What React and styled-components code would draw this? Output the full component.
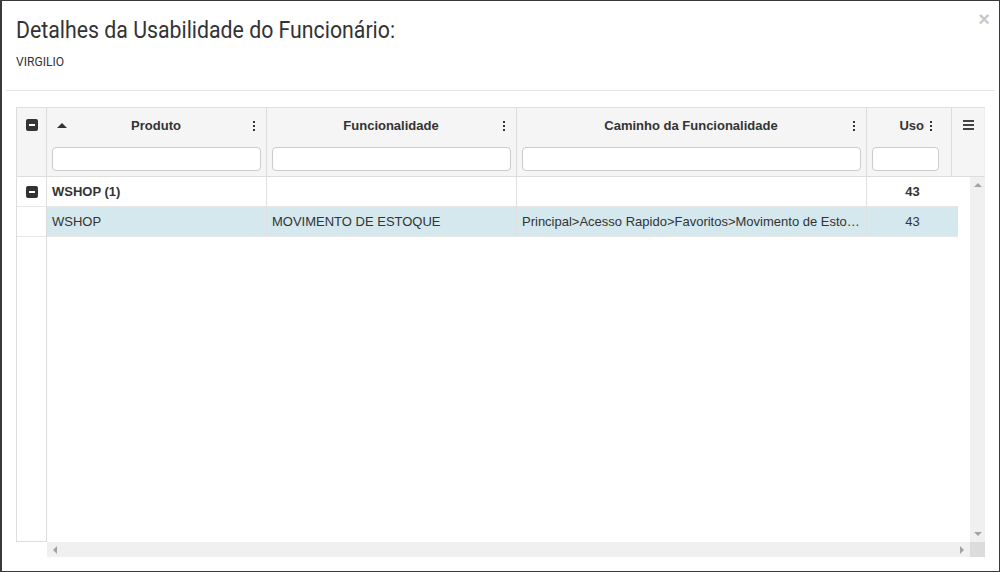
import styled, { createGlobalStyle } from "styled-components";

const GlobalStyle = createGlobalStyle`
  html, body {
    margin: 0;
    padding: 0;
    background: #fff;
  }
  * {
    box-sizing: border-box;
  }
`;

const columns = [
  { key: "produto", title: "Produto", width: 220, sort: true },
  { key: "func", title: "Funcionalidade", width: 250 },
  { key: "caminho", title: "Caminho da Funcionalidade", width: 350 },
];

const rows = [
  {
    group: true,
    cells: ["WSHOP (1)", "", "", "43"],
  },
  {
    selected: true,
    cells: [
      "WSHOP",
      "MOVIMENTO DE ESTOQUE",
      "Principal>Acesso Rapido>Favoritos>Movimento de Estoque",
      "43",
    ],
  },
];

const App = () => {
  return (
    <Modal>
      <GlobalStyle />
      <Header>
        <Title>Detalhes da Usabilidade do Funcionário:</Title>
        <SubTitle>VIRGILIO</SubTitle>
        <Close>×</Close>
      </Header>
      <Body>
        <Grid>
          <HeaderRow>
            <SelectCell>
              <MinusBox />
            </SelectCell>
            {columns.map((col) => (
              <HeaderCell key={col.key} $width={col.width}>
                <TitleLine>
                  {col.sort ? <SortArrow /> : <span />}
                  <ColTitle>{col.title}</ColTitle>
                  <Dots>
                    <i />
                    <i />
                    <i />
                  </Dots>
                </TitleLine>
                <FilterInput />
              </HeaderCell>
            ))}
            <HeaderCell $width={85}>
              <CompactTitleLine>
                <ColTitle>Uso</ColTitle>
                <Dots>
                  <i />
                  <i />
                  <i />
                </Dots>
              </CompactTitleLine>
              <FilterInput $short />
            </HeaderCell>
            <MenuCell>
              <Burger>
                <i />
                <i />
                <i />
              </Burger>
            </MenuCell>
          </HeaderRow>

          <GridBody>
            <SelectColumn>
              <SelectRowCell>
                <MinusBox />
              </SelectRowCell>
              <SelectRowCell />
            </SelectColumn>
            <Viewport>
              {rows.map((row, i) => (
                <Row key={i} $selected={row.selected}>
                  <Cell $width={220} $bold={row.group}>
                    {row.cells[0]}
                  </Cell>
                  <Cell $width={250} $bold={row.group}>
                    {row.cells[1]}
                  </Cell>
                  <Cell $width={350} $bold={row.group}>
                    {row.cells[2]}
                  </Cell>
                  <Cell $width={91} $bold={row.group} $center $last>
                    {row.cells[3]}
                  </Cell>
                </Row>
              ))}
            </Viewport>
            <VScroll>
              <Arrow $dir="up" />
              <Arrow $dir="down" />
            </VScroll>
            <span />
            <HScroll>
              <Arrow $dir="left" />
              <Arrow $dir="right" />
            </HScroll>
            <Corner />
          </GridBody>
        </Grid>
      </Body>
    </Modal>
  );
};

const Modal = styled.div`
  width: 1000px;
  height: 572px;
  border: 1px solid #3a3a3a;
  border-left-width: 2px;
  background: #fff;
  display: flex;
  flex-direction: column;
  font-family: "Liberation Sans", Arial, sans-serif;
  color: #333;
`;

const Header = styled.div`
  position: relative;
  padding: 15px 10px 0;
  height: 90px;
  border-bottom: 1px solid #e5e5e5;
  margin: 0 4px;
`;

const Title = styled.h4`
  margin: 0;
  font-family: Roboto, "Noto Sans", sans-serif;
  font-weight: 400;
  font-size: 24px;
  line-height: 28px;
  color: #333;
  white-space: nowrap;
  transform: scaleX(0.887);
  transform-origin: left center;
`;

const SubTitle = styled.div`
  margin-top: 10px;
  font-family: Roboto, "Noto Sans", sans-serif;
  font-size: 13px;
  line-height: 16px;
  color: #333;
  transform: scaleX(0.93);
  transform-origin: left center;
`;

const Close = styled.span`
  position: absolute;
  right: 5px;
  top: 7px;
  font-size: 20px;
  font-weight: bold;
  color: #c8c8c8;
  font-family: "Liberation Sans", Arial, sans-serif;
`;

const Body = styled.div`
  flex: 1;
  padding: 16px 14px 14px 14px;
  display: flex;
`;

const Grid = styled.div`
  flex: 1;
  display: flex;
  flex-direction: column;
  font-size: 13px;
`;

const HeaderRow = styled.div`
  display: flex;
  height: 70px;
  background: #f5f5f5;
  border: 1px solid #ddd;
  border-right-color: #eee;
`;

const SelectCell = styled.div`
  width: 30px;
  flex: none;
  border-right: 1px solid #ddd;
  display: flex;
  justify-content: center;
  padding-top: 11px;
`;

const MinusBox = styled.span`
  display: block;
  width: 12px;
  height: 12px;
  border-radius: 2px;
  background: #333;
  position: relative;
  &::after {
    content: "";
    position: absolute;
    left: 3px;
    right: 3px;
    top: 5px;
    height: 2px;
    background: #fff;
  }
`;

const HeaderCell = styled.div`
  width: ${(p) => p.$width}px;
  flex: none;
  border-right: 1px solid #ddd;
  display: flex;
  flex-direction: column;
  padding: 0 5px;
`;

const TitleLine = styled.div`
  height: 35px;
  display: grid;
  grid-template-columns: 1fr auto 1fr;
  align-items: center;
  padding: 0 6px 0 5px;
  & > :first-child {
    justify-self: start;
  }
  & > :last-child {
    justify-self: end;
  }
`;

const CompactTitleLine = styled.div`
  height: 35px;
  display: flex;
  align-items: center;
  justify-content: flex-end;
  gap: 6px;
  padding-right: 14px;
`;

const ColTitle = styled.span`
  font-weight: bold;
  color: #333;
`;

const SortArrow = styled.span`
  width: 0;
  height: 0;
  border-left: 5px solid transparent;
  border-right: 5px solid transparent;
  border-bottom: 5px solid #333;
`;

const Dots = styled.span`
  display: flex;
  flex-direction: column;
  gap: 2px;
  i {
    display: block;
    width: 2px;
    height: 2px;
    background: #333;
  }
`;

const FilterInput = styled.div`
  height: 24px;
  margin-top: 4px;
  margin-right: ${(p) => (p.$short ? "7px" : "0")};
  background: #fff;
  border: 1px solid #ccc;
  border-radius: 4px;
`;

const MenuCell = styled.div`
  flex: 1;
  display: flex;
  justify-content: center;
  padding-top: 12px;
`;

const Burger = styled.span`
  display: flex;
  flex-direction: column;
  gap: 2px;
  i {
    display: block;
    width: 11px;
    height: 2px;
    background: #444;
  }
`;

const GridBody = styled.div`
  flex: 1;
  display: grid;
  grid-template-columns: 31px 1fr 15px;
  grid-template-rows: 1fr 15px;
`;

const SelectColumn = styled.div`
  border: 1px solid #ddd;
  border-top: none;
`;

const SelectRowCell = styled.div`
  height: 30px;
  display: flex;
  align-items: center;
  justify-content: center;
  border-bottom: 1px solid #e6e6e6;
`;

const Viewport = styled.div`
  padding-right: 12px;
`;

const Row = styled.div`
  display: flex;
  height: 30px;
  border-bottom: 1px solid #e6e6e6;
  background: ${(p) => (p.$selected ? "#d4e8ee" : "#fff")};
`;

const Cell = styled.div`
  width: ${(p) => p.$width}px;
  flex: none;
  padding: 1px 5px 0;
  line-height: 28px;
  text-align: ${(p) => (p.$center ? "center" : "left")};
  border-right: ${(p) => (p.$last ? "none" : "1px solid #e0e0e0")};
  font-weight: ${(p) => (p.$bold ? "bold" : "normal")};
  white-space: nowrap;
  overflow: hidden;
  text-overflow: ellipsis;
`;

const VScroll = styled.div`
  background: #f0f0f0;
  display: flex;
  flex-direction: column;
  justify-content: space-between;
  align-items: center;
  padding: 6px 0;
`;

const HScroll = styled.div`
  background: #f0f0f0;
  display: flex;
  justify-content: space-between;
  align-items: center;
  padding: 0 6px;
`;

const Corner = styled.div`
  background: #dcdcdc;
`;

const arrowBorders = {
  up: "border-left: 4px solid transparent; border-right: 4px solid transparent; border-bottom: 4px solid #a3a3a3;",
  down: "border-left: 4px solid transparent; border-right: 4px solid transparent; border-top: 4px solid #a3a3a3;",
  left: "border-top: 4px solid transparent; border-bottom: 4px solid transparent; border-right: 4px solid #a3a3a3;",
  right: "border-top: 4px solid transparent; border-bottom: 4px solid transparent; border-left: 4px solid #a3a3a3;",
};

const Arrow = styled.span`
  width: 0;
  height: 0;
  ${(p) => arrowBorders[p.$dir]}
`;

export default App;
